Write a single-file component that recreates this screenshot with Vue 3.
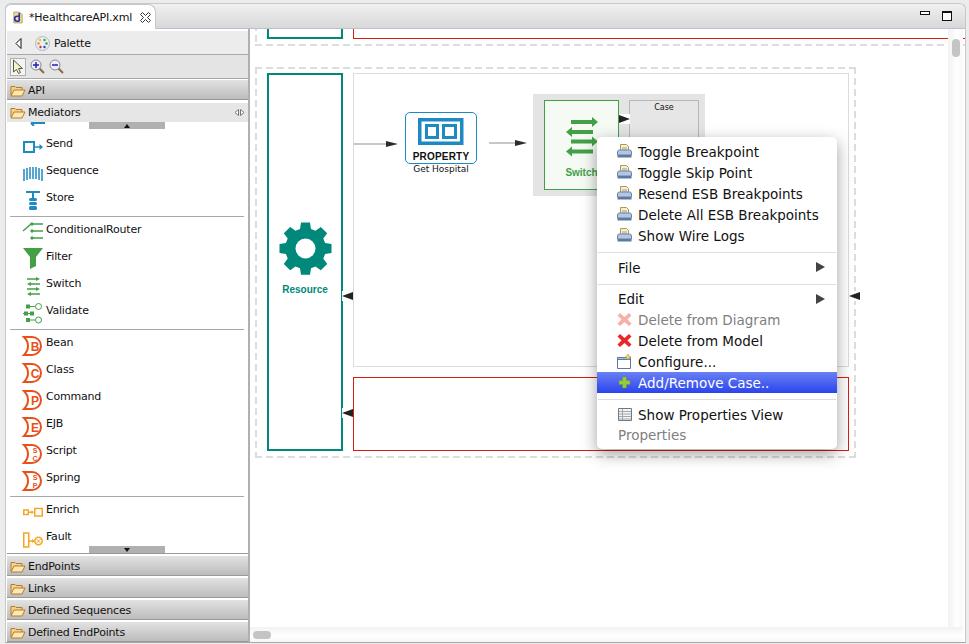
<script setup>
const groups = [
  [
    { name: 'Send', icon: 'send' },
    { name: 'Sequence', icon: 'sequence' },
    { name: 'Store', icon: 'store' }
  ],
  [
    { name: 'ConditionalRouter', icon: 'router' },
    { name: 'Filter', icon: 'filter' },
    { name: 'Switch', icon: 'switch' },
    { name: 'Validate', icon: 'validate' }
  ],
  [
    { name: 'Bean', icon: 'ext', letter: 'B' },
    { name: 'Class', icon: 'ext', letter: 'C' },
    { name: 'Command', icon: 'ext', letter: 'P' },
    { name: 'EJB', icon: 'ext', letter: 'E' },
    { name: 'Script', icon: 'ext', letter: 'S', sub: 'C' },
    { name: 'Spring', icon: 'ext', letter: 'S', sub: 'P' }
  ],
  [
    { name: 'Enrich', icon: 'enrich' },
    { name: 'Fault', icon: 'fault' }
  ]
]
const bottomDrawers = ['EndPoints', 'Links', 'Defined Sequences', 'Defined EndPoints']
const debugItems = ['Toggle Breakpoint', 'Toggle Skip Point', 'Resend ESB Breakpoints', 'Delete All ESB Breakpoints', 'Show Wire Logs']
</script>

<template>
  <div class="window">
    <div class="tabbar">
      <div class="tab">
        <svg class="xml-icon" width="10" height="13" viewBox="0 0 12 15">
          <path d="M1 1h7l3 3v10H1z" fill="#e8dfa8" stroke="#a89a50" />
          <path d="M7.500 2v10M7.500 12H5a2.500 2.500 0 0 1 0-6h2.500" fill="none" stroke="#3a2a9a" stroke-width="2" />
        </svg>
        <span>*HealthcareAPI.xml</span>
        <svg class="tab-close" width="11" height="11" viewBox="0 0 11 11">
          <path d="M.5 2.500 2.500 .5 5.500 3.500 8.500 .5 10.500 2.500 7.500 5.500 10.500 8.500 8.500 10.500 5.500 7.500 2.500 10.500 .5 8.500 3.500 5.500z" fill="#fff" stroke="#222" stroke-width=".9" />
        </svg>
      </div>
      <div class="win-controls">
        <span class="win-min"></span>
        <span class="win-max"></span>
      </div>
    </div>

    <div class="body">
      <aside class="palette">
        <div class="palette-head">
          <svg width="7" height="11" viewBox="0 0 7 11"><path d="M6 .5v10L1 5.500z" fill="#fff" stroke="#111" /></svg>
          <svg class="palette-logo" width="15" height="15" viewBox="0 0 15 15">
            <circle cx="7.500" cy="7.500" r="7" fill="#e8eef2" stroke="#b0b8c0" />
            <circle cx="5" cy="4" r="1.200" fill="#e8c020" /><circle cx="9.500" cy="4" r="1.200" fill="#40a040" />
            <circle cx="3.500" cy="7.500" r="1.200" fill="#e89020" /><circle cx="11.500" cy="7.500" r="1.200" fill="#30a030" />
            <circle cx="5.500" cy="11" r="1.200" fill="#d03030" /><circle cx="9.500" cy="11" r="1.200" fill="#3040c0" />
          </svg>
          <span>Palette</span>
        </div>
        <div class="tools">
          <span class="tool-on">
            <svg width="12" height="16" viewBox="0 0 12 16"><path d="M1.500 1v12l3-2.500 2 4 2-1-2-4h4z" fill="#f8f4c0" stroke="#555" /></svg>
          </span>
          <svg width="15" height="15" viewBox="0 0 15 15">
            <path d="M9 9l5 5" stroke="#8a6a40" stroke-width="2" />
            <circle cx="6" cy="6" r="5" fill="#eef" stroke="#888" />
            <path d="M3 6h6M6 3v6" stroke="#2020b0" stroke-width="1.500" />
          </svg>
          <svg width="15" height="15" viewBox="0 0 15 15">
            <path d="M9 9l5 5" stroke="#8a6a40" stroke-width="2" />
            <circle cx="6" cy="6" r="5" fill="#eef" stroke="#888" />
            <path d="M3 6h6" stroke="#2020b0" stroke-width="1.500" />
          </svg>
        </div>

        <div class="drawer first">
          <svg class="folder" width="16" height="13" viewBox="0 0 16 13">
            <path d="M1 11V2.500h4l1 1h6V6" fill="#f4d48c" stroke="#b87a28" />
            <path d="M4 6h11l-3 6H1z" fill="#fce8b4" stroke="#b87a28" />
          </svg>
          API
        </div>
        <div class="drawer open">
          <svg class="folder" width="16" height="13" viewBox="0 0 16 13">
            <path d="M1 11V2.500h4l1 1h6V6" fill="#f4d48c" stroke="#b87a28" />
            <path d="M4 6h11l-3 6H1z" fill="#fce8b4" stroke="#b87a28" />
          </svg>
          Mediators
          <svg class="pin" width="11" height="7" viewBox="0 0 11 7"><path d="M4.500 .5 1 3.500l3.500 3zM6.500 .5l3.500 3-3.500 3z" fill="#fff" stroke="#777" /></svg>
        </div>

        <div class="items">
          <div class="scroll-btn up"><b></b></div>
          <svg class="peek" width="16" height="4" viewBox="0 0 16 4"><path d="M2 1h14M2 1l3-1M2 1l3 3" stroke="#1e8ac4" stroke-width="2" fill="none" /></svg>
          <div v-for="(group, g) in groups" :key="g" class="group" :class="{ lead: g === 0, tail: g === groups.length - 1 }">
            <div v-for="item in group" :key="item.name" class="item">
              <svg class="item-icon" width="20" height="20" viewBox="0 0 20 20">
                <g v-if="item.icon === 'send'" fill="none" stroke="#1e8ac4">
                  <rect x="1" y="5" width="10" height="10" stroke-width="2" />
                  <path d="M11 10h8" stroke-width="1.500" />
                  <path d="M16.500 7l3.500 3-3.500 3z" fill="#1e8ac4" stroke="none" />
                </g>
                <g v-else-if="item.icon === 'sequence'" stroke="#1e8ac4" stroke-width="1.500">
                  <path d="M1 5v12M4 4v12M7 3v12M10 3v12M13 3v12M16 4v12M19 5v12" />
                </g>
                <g v-else-if="item.icon === 'store'" fill="#1e8ac4">
                  <path d="M3 0h14v2h-6v5H9V2H3z" />
                  <rect x="6" y="7" width="8" height="3" rx="1.500" />
                  <rect x="6" y="11" width="8" height="3" rx="1.500" />
                  <rect x="6" y="15" width="8" height="4" rx="1.500" />
                </g>
                <g v-else-if="item.icon === 'router'" fill="#43a047" stroke="#43a047">
                  <path d="M0 8 8 1h12M9 8h11M9 15h11" fill="none" stroke-width="1.500" />
                  <circle cx="9" cy="1" r="1.200" /><circle cx="9" cy="8" r="1.200" /><circle cx="9" cy="15" r="1.200" />
                </g>
                <path v-else-if="item.icon === 'filter'" d="M0 -2h20L13 7v9l-6 3V7z" fill="#43a047" />
                <path v-else-if="item.icon === 'switch'" d="M4 1.200h9V0l4 2-4 2V2.800H4zM17 6.200H8V5L4 7l4 2V7.800h9zM4 11.200h9V10l4 2-4 2v-1.200H4zM17 16.200H8V15l-4 2 4 2v-1.200h9z" fill="#43a047" />
                <g v-else-if="item.icon === 'validate'" fill="#43a047" stroke="#43a047">
                  <rect x="3.500" y="1" width="3" height="3" /><path d="M6 2.500h6" fill="none" />
                  <circle cx="15.500" cy="2.500" r="3" fill="#fff" />
                  <rect x="1.500" y="8" width="3" height="3" /><path d="M0 9.500h11" fill="none" /><rect x="7.500" y="8" width="3" height="3" />
                  <rect x="3.500" y="14.500" width="3" height="3" /><path d="M6 16h6" fill="none" />
                  <circle cx="15.500" cy="16" r="3" fill="#fff" />
                </g>
                <g v-else-if="item.icon === 'ext'">
                  <path d="M1 1h8a9 9 0 0 1 0 18H1c3-3 4-6 4-9S4 4 1 1z" fill="#fff" stroke="#e8501a" stroke-width="2" />
                  <text v-if="!item.sub" x="12" y="14.500" class="ext-letter">{{ item.letter }}</text>
                  <template v-else>
                    <text x="12" y="8.500" class="ext-letter small">{{ item.letter }}</text>
                    <text x="12" y="16.500" class="ext-letter small">{{ item.sub }}</text>
                  </template>
                </g>
                <g v-else-if="item.icon === 'enrich'" fill="none" stroke="#f5a623" stroke-width="1.500">
                  <rect x=".75" y="7" width="4.500" height="4.500" />
                  <path d="M5 9.200h5" /><path d="M8.500 7.200l2.500 2-2.500 2z" fill="#f5a623" stroke="none" />
                  <rect x="11.750" y="5.500" width="7.500" height="7.500" />
                </g>
                <g v-else-if="item.icon === 'fault'" fill="none" stroke="#f5a623" stroke-width="1.500">
                  <rect x=".75" y="3" width="5" height="14" />
                  <path d="M6 11h5" /><path d="M9 9l2.500 2-2.500 2z" fill="#f5a623" stroke="none" />
                  <circle cx="15.500" cy="11" r="3.700" />
                  <path d="M13.500 9l4 4M17.500 9l-4 4" stroke-width="1" />
                </g>
              </svg>
              <span>{{ item.name }}</span>
            </div>
          </div>
          <div class="scroll-btn down"><b></b></div>
        </div>

        <div v-for="name in bottomDrawers" :key="name" class="drawer">
          <svg class="folder" width="16" height="13" viewBox="0 0 16 13">
            <path d="M1 11V2.500h4l1 1h6V6" fill="#f4d48c" stroke="#b87a28" />
            <path d="M4 6h11l-3 6H1z" fill="#fce8b4" stroke="#b87a28" />
          </svg>
          {{ name }}
        </div>
      </aside>

      <main class="editor">
        <div class="canvas">
          <div class="dash dash-top"></div>
          <div class="res-box top-res"></div>
          <div class="red-box top-red"></div>

          <div class="dash dash-main"></div>
          <div class="res-box main-res">
            <svg width="53" height="53" viewBox="-26.500 -26.500 53 53">
              <path fill="#00897b" d="M-4.500-26h9l1 6.500 4.500 1.800 5.300-3.900 6.400 6.400-3.900 5.300 1.800 4.500 6.400 1v9l-6.400 1-1.800 4.500 3.900 5.300-6.400 6.400-5.300-3.900-4.500 1.800-1 6.500h-9l-1-6.500-4.500-1.800-5.300 3.900-6.400-6.400 3.900-5.300-1.800-4.500-6.400-1v-9l6.400-1 1.800-4.500-3.900-5.300 6.400-6.400 5.300 3.900 4.500-1.800z" />
              <circle r="10" fill="#fff" />
            </svg>
            <span>Resource</span>
          </div>
          <div class="grey-box"></div>
          <div class="red-box main-red"></div>

          <div class="arrow in-arrow"><i></i><b></b></div>
          <div class="property">
            <svg width="46" height="27" viewBox="0 0 46 27" fill="none" stroke="#1e8ac4">
              <rect x="1.750" y="1.750" width="42" height="23.500" stroke-width="3.500" />
              <rect x="8.500" y="7.500" width="11" height="12" stroke-width="3" />
              <rect x="25.500" y="7.500" width="12" height="12" stroke-width="3" />
            </svg>
            <strong>PROPERTY</strong>
          </div>
          <div class="property-label">Get Hospital</div>
          <div class="arrow out-arrow"><i></i><b></b></div>

          <div class="switch-wrap">
            <div class="switch-node">
              <svg width="32" height="40" viewBox="0 0 32 40" fill="#43a047">
                <path d="M5 3h21V0l6 5-6 5V7H5zM27 13H6v-3l-6 5 6 5v-3h21z" />
                <path d="M5 3h21V0l6 5-6 5V7H5zM27 13H6v-3l-6 5 6 5v-3h21z" transform="translate(0 19.500)" />
              </svg>
              <span>Switch</span>
            </div>
            <div class="case-box">Case</div>
            <i class="tri small-tri"></i>
          </div>

          <i class="tri res-tri-1"></i>
          <i class="tri res-tri-2"></i>
          <i class="tri right-tri"></i>
        </div>

        <div class="vscroll"><b></b></div>
        <div class="hscroll"><b></b></div>

        <div class="menu">
          <div v-for="label in debugItems" :key="label" class="menu-item">
            <svg class="menu-icon" width="15" height="15" viewBox="0 0 15 15">
              <path d="M3.500 .5h6l2 2v6h-8z" fill="#fbf0c0" stroke="#a89860" />
              <path d="M5 4h5M5 6h5" stroke="#90a0b8" />
              <path d="M.5 8a2 2 0 0 1 2-2h10a2 2 0 0 1 2 2v3H.5z" fill="#b4c6e0" stroke="#6c84a8" />
              <path d="M.5 11h14v2.500H.5z" fill="#5c78a4" />
            </svg>
            {{ label }}
          </div>
          <hr />
          <div class="menu-item plain">File<i class="sub-arrow"></i></div>
          <hr />
          <div class="menu-item plain edit">Edit<i class="sub-arrow"></i></div>
          <div class="menu-item disabled">
            <svg class="menu-icon" width="15" height="15" viewBox="0 0 15 15"><path d="M.5 3.500 3 1 7.500 5 12 1 14.500 3.500 10.500 7.500 14.500 11.500 12 14 7.500 10 3 14 .5 11.500 4.500 7.500z" fill="#f6b0a8" /></svg>
            Delete from Diagram
          </div>
          <div class="menu-item">
            <svg class="menu-icon" width="15" height="15" viewBox="0 0 15 15"><path d="M.5 3.500 3 1 7.500 5 12 1 14.500 3.500 10.500 7.500 14.500 11.500 12 14 7.500 10 3 14 .5 11.500 4.500 7.500z" fill="#e82828" /></svg>
            Delete from Model
          </div>
          <div class="menu-item">
            <svg class="menu-icon" width="15" height="15" viewBox="0 0 15 15">
              <path d="M.5 3.500h13v11H.5z" fill="#fff" stroke="#5c78a4" />
              <path d="M.5 3.500h13v2H.5z" fill="#a8c0e0" stroke="#5c78a4" />
              <path d="M11 0l1 2 2 1-2 1-1 2-1-2-2-1 2-1z" fill="#f4d860" stroke="#a88a20" stroke-width=".5" />
            </svg>
            Configure...
          </div>
          <div class="menu-item active">
            <svg class="menu-icon" width="15" height="15" viewBox="0 0 15 15"><path d="M5.500 2h4v3.500H13v4H9.500V13h-4V9.500H2v-4h3.500z" fill="#96cc3c" stroke="#6a9a24" stroke-width=".5" /></svg>
            Add/Remove Case..
          </div>
          <hr />
          <div class="menu-item">
            <svg class="menu-icon" width="15" height="15" viewBox="0 0 15 15">
              <path d="M1.500 1.500h13v12h-13z" fill="#f4f4f4" stroke="#707880" />
              <path d="M2 4.500h12M2 7h12M2 9.500h12M2 12h12M5.500 2v11" stroke="#a0a8b0" />
            </svg>
            Show Properties View
          </div>
          <div class="menu-item plain disabled last">Properties</div>
        </div>
      </main>
    </div>
  </div>
</template>

<style scoped>
.window {
  width: 969px;
  height: 644px;
  background: #ececec;
  display: flex;
  flex-direction: column;
  overflow: hidden;
  position: relative;
  font-family: "DejaVu Sans", sans-serif;
  color: #111;
}
.tabbar {
  height: 26px;
  flex: none;
  margin: 3px 3px 0 5px;
  border: 1px solid #c8c8c8;
  border-bottom: 1px solid #b8c0d8;
  border-radius: 6px 6px 0 0;
  background: linear-gradient(#f0f0f0, #d8d8d8);
  display: flex;
  justify-content: space-between;
  box-sizing: border-box;
}
.tab {
  width: 151px;
  height: 26px;
  margin: 0 0 -1px -1px;
  box-sizing: border-box;
  background: #fff;
  border: 1px solid #c8c8c8;
  border-bottom: none;
  border-radius: 6px 8px 0 0;
  display: flex;
  align-items: center;
  padding-left: 7px;
  font-size: 11px;
  letter-spacing: -.2px;
  gap: 6px;
}
.tab-close { margin-left: 2px; }
.win-controls {
  display: flex;
  align-items: flex-start;
  gap: 12px;
  padding: 7px 13px 0 0;
}
.win-min {
  width: 10px;
  height: 4px;
  border: 1px solid #111;
  background: #fff;
  box-sizing: border-box;
}
.win-max {
  width: 10px;
  height: 10px;
  border: 1px solid #111;
  border-top-width: 2px;
  background: #fff;
  box-sizing: border-box;
}
.body {
  flex: 1;
  display: flex;
  min-height: 0;
  margin: 0 3px 1px 5px;
  border-left: 1px solid #c8c8c8;
  border-right: 1px solid #c8c8c8;
  border-bottom: 1px solid #a8a8a8;
  background: #fff;
  padding-left: 1px;
}
.palette {
  width: 241px;
  flex: none;
  background: #fff;
  display: flex;
  flex-direction: column;
  padding-top: 2px;
  border-right: 2px solid #b0b0b0;
  letter-spacing: -.2px;
}
.palette-head {
  height: 24px;
  flex: none;
  display: flex;
  align-items: center;
  font-size: 11px;
  background: #ececec;
  border-bottom: 1px solid #a8a8a8;
  padding: 1px 0 0 8px;
  box-sizing: border-box;
}
.palette-logo { margin: 0 4px 0 13px; }
.tools {
  height: 24px;
  flex: none;
  display: flex;
  align-items: center;
  gap: 4px;
  background: #e4e4e4;
  border-bottom: 1px solid #a8a8a8;
  box-sizing: border-box;
  padding-left: 3px;
}
.tool-on {
  width: 16px;
  height: 18px;
  background: #f4f4f4;
  border: 1px solid #b0b0b0;
  display: flex;
  align-items: center;
  justify-content: center;
  box-sizing: border-box;
}
.drawer {
  height: 18px;
  flex: none;
  margin-top: 2px;
  display: flex;
  align-items: center;
  padding: 1px 0 0 3px;
  font-size: 11px;
  background: linear-gradient(#e2e2e2, #bcbcbc);
  border-bottom: 1px solid #999;
  position: relative;
}
.drawer.first { margin-top: 1px; }
.drawer.open {
  height: 19px;
  padding-top: 0;
  background: #e6e6e6;
  border-bottom: none;
  margin-top: 3px;
}
.folder {
  flex: none;
  margin-right: 2px;
}
.pin { position: absolute; right: 3px; top: 6px; }
.items {
  flex: 1;
  min-height: 0;
  position: relative;
  overflow: hidden;
  background: #fff;
  padding: 0 0 0 3px;
  border-bottom: 1px solid #999;
}
.peek {
  display: block;
  margin: 0 0 0 19px;
}
.group {
  border-bottom: 1px solid #a8a8a8;
  padding: 3px 0 1px;
  margin-right: 4px;
}
.group.lead { padding-top: 8px; }
.group.tail { border-bottom: none; }
.item {
  height: 27px;
  display: flex;
  align-items: flex-start;
  font-size: 11px;
  padding-left: 16px;
  margin-left: -3px;
}
.item span { margin: 3px 0 0 3px; }
.item-icon { flex: none; margin-top: 3px; overflow: visible; }
.ext-letter {
  font: bold 12px "Liberation Sans", sans-serif;
  fill: #e8501a;
  text-anchor: middle;
}
.ext-letter.small { font-size: 7px; }
.scroll-btn {
  position: absolute;
  left: 82px;
  width: 76px;
  height: 7px;
  background: #b0b0b0;
  display: flex;
  justify-content: center;
  z-index: 1;
}
.scroll-btn b {
  width: 0;
  height: 0;
  border-left: 3.500px solid transparent;
  border-right: 3.500px solid transparent;
  margin-top: 2px;
}
.scroll-btn.up { top: 0; }
.scroll-btn.up b { border-bottom: 4px solid #111; }
.scroll-btn.down { bottom: 0; }
.scroll-btn.down b { border-top: 4px solid #111; }

.editor {
  flex: 1;
  position: relative;
  background: #fff;
  min-width: 0;
}
.canvas {
  position: absolute;
  inset: 0;
  overflow: hidden;
}
.dash {
  position: absolute;
  box-sizing: border-box;
  background:
    repeating-linear-gradient(90deg, #ddd 0 7px, transparent 7px 11px) left top / 100% 2px no-repeat,
    repeating-linear-gradient(90deg, #ddd 0 7px, transparent 7px 11px) left bottom / 100% 2px no-repeat,
    repeating-linear-gradient(#ddd 0 7px, transparent 7px 11px) left top / 2px 100% no-repeat,
    repeating-linear-gradient(#ddd 0 7px, transparent 7px 11px) right top / 2px 100% no-repeat;
}
.dash-top { left: 5px; top: -60px; width: 720px; height: 77px; }
.dash-main { left: 5px; top: 38px; width: 601px; height: 391px; }
.res-box {
  position: absolute;
  box-sizing: border-box;
  border: 2px solid #00897b;
  background: #fff;
}
.top-res { left: 17px; top: -40px; width: 76px; height: 50px; }
.main-res {
  left: 17px;
  top: 44px;
  width: 76px;
  height: 378px;
  display: flex;
  flex-direction: column;
  align-items: center;
  padding-top: 147px;
  color: #00897b;
  font: bold 10px "Liberation Sans", sans-serif;
}
.main-res span { margin-top: 9px; }
.red-box {
  position: absolute;
  box-sizing: border-box;
  border: 1px solid #d81e10;
  background: #fff;
}
.top-red { left: 103px; top: -40px; width: 700px; height: 50px; }
.main-red { left: 103px; top: 348px; width: 496px; height: 74px; }
.grey-box {
  position: absolute;
  left: 103px;
  top: 44px;
  width: 496px;
  height: 294px;
  border: 1px solid #dcdcdc;
  box-sizing: border-box;
}
.arrow {
  position: absolute;
  height: 9px;
  display: flex;
  align-items: center;
}
.arrow i { height: 2px; background: #c8c8c8; }
.arrow b {
  width: 0;
  height: 0;
  border-left: 12px solid #2c2c2c;
  border-top: 3.500px solid transparent;
  border-bottom: 3.500px solid transparent;
}
.in-arrow { left: 104px; top: 110px; }
.in-arrow i { width: 32px; }
.out-arrow { left: 239px; top: 109px; }
.out-arrow i { width: 26px; }
.property {
  position: absolute;
  left: 155px;
  top: 83px;
  width: 72px;
  height: 52px;
  box-sizing: border-box;
  border: 1px solid #1e8ac4;
  border-radius: 5px;
  background: #fff;
  display: flex;
  flex-direction: column;
  align-items: center;
  padding-top: 5px;
}
.property strong {
  font: bold 10px "Liberation Sans", sans-serif;
  letter-spacing: .2px;
  margin-top: 6px;
}
.property-label {
  position: absolute;
  left: 155px;
  top: 135px;
  width: 72px;
  text-align: center;
  font: 9px "DejaVu Sans", sans-serif;
}
.switch-wrap {
  position: absolute;
  left: 283px;
  top: 65px;
  width: 172px;
  height: 102px;
  background: #e4e4e4;
  display: flex;
}
.switch-node {
  margin: 6px 0 0 11px;
  width: 75px;
  height: 90px;
  box-sizing: border-box;
  border: 1px solid #43a047;
  background: #f5faf5;
  display: flex;
  flex-direction: column;
  align-items: center;
  padding-top: 16px;
  color: #43a047;
  font: bold 10px "Liberation Sans", sans-serif;
}
.switch-node span { margin-top: 10px; }
.case-box {
  margin: 6px 0 0 10px;
  width: 70px;
  height: 40px;
  box-sizing: border-box;
  border: 1px solid #b8b8b8;
  background: #e6e6e6;
  text-align: center;
  font: 8px "DejaVu Sans", sans-serif;
  padding-top: 2px;
}
.tri {
  position: absolute;
  width: 11px;
  height: 10px;
  background: #fff;
}
.tri::after {
  content: "";
  position: absolute;
  left: 0;
  top: 1px;
  width: 0;
  height: 0;
  border-top: 4px solid transparent;
  border-bottom: 4px solid transparent;
  border-right: 11px solid #222;
}
.res-tri-1 { left: 92px; top: 262px; }
.res-tri-2 { left: 92px; top: 379px; }
.right-tri { left: 599px; top: 262px; }
.small-tri { left: 86px; top: 20px; }
.small-tri::after {
  border-right: none;
  border-left: 11px solid #222;
}
.vscroll {
  position: absolute;
  right: 2px;
  top: 0;
  bottom: 15px;
  width: 15px;
  background: linear-gradient(90deg, #f2f2f2, #fff 60%, #f6f6f6);
}
.vscroll b {
  position: absolute;
  left: 4px;
  top: 10px;
  width: 8px;
  height: 18px;
  border-radius: 4px;
  background: #c4c4c4;
}
.hscroll {
  position: absolute;
  left: 0;
  right: 2px;
  bottom: 0;
  height: 15px;
  background: linear-gradient(#f2f2f2, #fff 60%, #f6f6f6);
}
.hscroll b {
  position: absolute;
  left: 3px;
  top: 4px;
  width: 18px;
  height: 8px;
  border-radius: 4px;
  background: #c4c4c4;
}
.menu {
  position: absolute;
  left: 347px;
  top: 108px;
  width: 240px;
  box-sizing: border-box;
  padding: 4px 0;
  background: #fff;
  border-radius: 5px;
  font-size: 13.500px;
  box-shadow: 0 5px 16px rgba(0, 0, 0, .38);
  z-index: 2;
}
.menu-item {
  height: 21px;
  display: flex;
  align-items: center;
  padding-left: 20px;
  position: relative;
}
.menu-item.edit, .menu-item.last { height: 20px; }
.menu-item.plain { padding-left: 21px; }
.menu-icon { flex: none; margin-right: 6px; }
.menu-item.disabled { color: #808080; }
.menu-item.active {
  color: #fff;
  background: linear-gradient(#6a80f4, #2a44ee);
}
.menu hr {
  border: none;
  border-top: 1px solid #ddd;
  margin: 6px 1px 4px;
}
.sub-arrow {
  position: absolute;
  right: 12px;
  top: 5px;
  width: 0;
  height: 0;
  border-left: 9px solid #444;
  border-top: 5px solid transparent;
  border-bottom: 5px solid transparent;
}
</style>

<style>
html, body { margin: 0; background: #fff; }
</style>
